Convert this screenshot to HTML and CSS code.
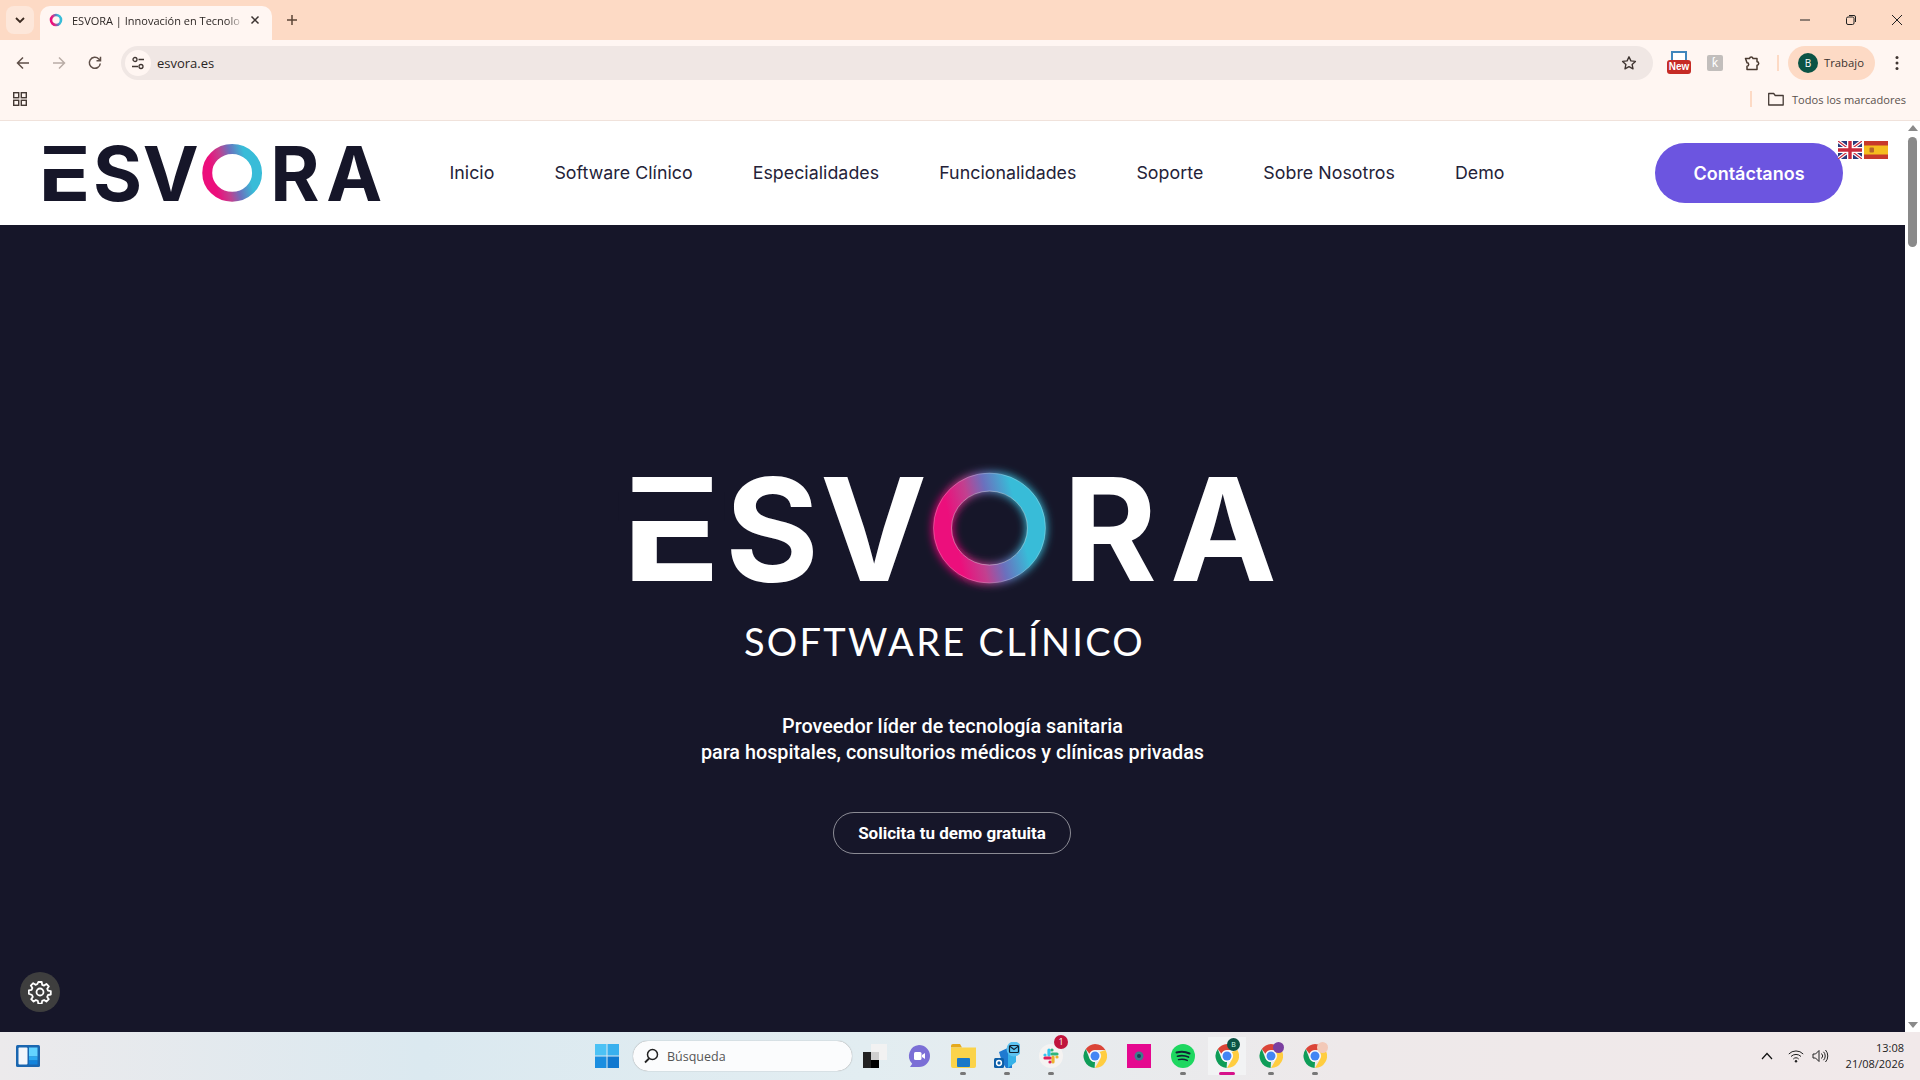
FILE: index.html
```html
<!DOCTYPE html>
<html lang="es">
  <head>
    <meta charset="utf-8" />
    <title>ESVORA | Innovación en Tecnología</title>
    <link rel="stylesheet" href="styles.css">
  </head>
  <body>
    <svg class="defs" width="0" height="0">
      <defs>
        <linearGradient id="ringGrad" x1="0" y1="0.62" x2="1" y2="0.38">
          <stop offset="0.12" stop-color="#ec0f7c" />
          <stop offset="0.35" stop-color="#c2408f" />
          <stop offset="0.55" stop-color="#6b70bd" />
          <stop offset="0.82" stop-color="#38bcd8" />
        </linearGradient>
        <symbol id="chromeIcon" viewBox="0 0 24 24">
          <path fill="#db4437" d="M12 0a12 12 0 0 1 10.400 6H12a6 6 0 0 0-5.600 3.800L2.800 5A12 12 0 0 1 12 0z" />
          <path fill="#ffcd40" d="M22.400 6A12 12 0 0 1 12 24l5.200-9a6 6 0 0 0-.6-6.900z" />
          <path fill="#0f9d58" d="M2.800 5l3.900 9.900A6 6 0 0 0 12 18l-.4 6A12 12 0 0 1 2.800 5z" />
          <circle cx="12" cy="12" r="5.600" fill="#fff" />
          <circle cx="12" cy="12" r="4.500" fill="#4285f4" />
        </symbol>
      </defs>
    </svg>

    <header class="browser">
      <div class="tabstrip">
        <button class="tab-search">
          <svg width="12" height="12" viewBox="0 0 12 12"><path d="M2 4l4 4 4-4" fill="none" stroke="#3b2a20" stroke-width="1.800" /></svg>
        </button>
        <div class="tab">
          <svg class="favicon" viewBox="0 0 14 14"><circle cx="7" cy="7" r="5" fill="none" stroke="url(#ringGrad)" stroke-width="2.600" /></svg>
          <span class="tab-title">ESVORA | Innovación en Tecnolo</span>
          <svg class="tab-close" width="10" height="10" viewBox="0 0 10 10"><path d="M1.500 1.500l7 7m0-7l-7 7" stroke="#3b3331" stroke-width="1.500" /></svg>
        </div>
        <svg class="new-tab" width="12" height="12" viewBox="0 0 12 12"><path d="M6 1v10M1 6h10" stroke="#5b4436" stroke-width="1.500" /></svg>
        <div class="win-controls">
          <svg width="12" height="12" viewBox="0 0 12 12"><path d="M1 6h10" stroke="#222" /></svg>
          <svg width="12" height="12" viewBox="0 0 12 12"><rect x="1.500" y="3" width="7.500" height="7.500" rx="1.500" fill="none" stroke="#222" /><path d="M4 1.500h5a1.500 1.500 0 0 1 1.500 1.500v5" fill="none" stroke="#222" /></svg>
          <svg width="12" height="12" viewBox="0 0 12 12"><path d="M1 1l10 10m0-10L1 11" stroke="#222" /></svg>
        </div>
      </div>

      <div class="toolbar">
        <svg class="tool-btn" width="16" height="16" viewBox="0 0 16 16"><path d="M14 8H3m5-5.500L2.500 8 8 13.500" fill="none" stroke="#5f4f48" stroke-width="1.500" /></svg>
        <svg class="tool-btn" width="16" height="16" viewBox="0 0 16 16"><path d="M2 8h11M8 2.500L13.500 8 8 13.500" fill="none" stroke="#b9aca6" stroke-width="1.500" /></svg>
        <svg class="tool-btn" width="16" height="16" viewBox="0 0 16 16"><path d="M13.300 8.500A5.500 5.500 0 1 1 11.800 4L13.500 5.700M13.500 1.800v4h-4" fill="none" stroke="#5f4f48" stroke-width="1.500" /></svg>
        <div class="omnibox">
          <span class="tune-chip">
            <svg width="14" height="14" viewBox="0 0 14 14"><circle cx="4" cy="3.500" r="2" fill="none" stroke="#3f3531" stroke-width="1.300" /><path d="M7.500 3.500H13M1 10.500h6" stroke="#3f3531" stroke-width="1.300" /><circle cx="10" cy="10.500" r="2" fill="none" stroke="#3f3531" stroke-width="1.300" /></svg>
          </span>
          <span class="url">esvora.es</span>
          <svg class="star" width="16" height="16" viewBox="0 0 16 16"><path d="M8 1.800l1.900 4.100 4.500.5-3.300 3 .9 4.400L8 11.600l-4 2.200.9-4.400-3.300-3 4.500-.5z" fill="none" stroke="#3f3531" stroke-width="1.400" stroke-linejoin="round" /></svg>
        </div>
        <div class="ext ext-new">
          <span class="ext-new-top"></span>
          <span class="ext-new-label">New</span>
        </div>
        <span class="ext ext-k">ƙ</span>
        <svg class="ext" width="16" height="16" viewBox="0 0 16 16"><path d="M1.500 3.500h4a1.800 1.800 0 0 1 3.500 0H13v3.300a1.700 1.700 0 0 1 0 3.400V14.500H3v-3.300a1.700 1.700 0 0 0 0-3.400z" fill="none" stroke="#4a3a30" stroke-width="1.500" stroke-linejoin="round" /></svg>
        <span class="tool-sep"></span>
        <div class="profile">
          <span class="avatar">B</span>
          <span>Trabajo</span>
        </div>
        <svg class="kebab" width="4" height="16" viewBox="0 0 4 16"><circle cx="2" cy="2.500" r="1.500" fill="#3f3531" /><circle cx="2" cy="8" r="1.500" fill="#3f3531" /><circle cx="2" cy="13.500" r="1.500" fill="#3f3531" /></svg>
      </div>

      <div class="bookmarks">
        <svg width="14" height="14" viewBox="0 0 14 14"><g fill="none" stroke="#453a35" stroke-width="1.400"><rect x="0.700" y="0.700" width="5" height="5" /><rect x="8.300" y="0.700" width="5" height="5" /><rect x="0.700" y="8.300" width="5" height="5" /><rect x="8.300" y="8.300" width="5" height="5" /></g></svg>
        <span class="book-sep"></span>
        <svg width="16" height="14" viewBox="0 0 16 14"><path d="M.7 1.500h5l1.500 2h8v9.500H.7z" fill="none" stroke="#453a35" stroke-width="1.300" stroke-linejoin="round" /></svg>
        <span class="book-label">Todos los marcadores</span>
      </div>
    </header>

    <div class="viewport">
      <div class="page">
        <nav class="site-nav">
          <div class="logo logo-small">
            <span class="l-e">E</span><span class="l-s">S</span><span class="l-v">V</span>
            <svg class="l-o" viewBox="0 0 115 110"><ellipse cx="57.500" cy="55" rx="47.500" ry="45.500" fill="none" stroke="url(#ringGrad)" stroke-width="19" filter="blur(.8px)" /></svg>
            <span class="l-r">R</span><span class="l-a">A</span>
          </div>
          <ul class="menu">
            <li>Inicio</li>
            <li>Software Clínico</li>
            <li>Especialidades</li>
            <li>Funcionalidades</li>
            <li>Soporte</li>
            <li>Sobre Nosotros</li>
            <li>Demo</li>
          </ul>
          <button class="contact">Contáctanos</button>
          <div class="flags">
            <svg width="24" height="18" viewBox="0 0 24 18">
              <rect width="24" height="18" fill="#2a3a7c" />
              <path d="M0 0l24 18M24 0L0 18" stroke="#fff" stroke-width="3.500" />
              <path d="M0 0l24 18M24 0L0 18" stroke="#c8283c" stroke-width="1.200" />
              <path d="M12 0v18M0 9h24" stroke="#fff" stroke-width="6" />
              <path d="M12 0v18M0 9h24" stroke="#c8283c" stroke-width="3.400" />
            </svg>
            <svg width="24" height="18" viewBox="0 0 24 18">
              <rect width="24" height="18" fill="#c8392b" />
              <rect y="4.500" width="24" height="9" fill="#f5bd1f" />
              <rect x="5.500" y="6.500" width="4.500" height="5" rx="1" fill="#b5652c" />
            </svg>
          </div>
        </nav>

        <main class="hero">
          <div class="logo logo-big">
            <span class="l-e">E</span><span class="l-s">S</span><span class="l-v">V</span>
            <svg class="l-o" viewBox="0 0 115 110">
              <defs>
                <filter id="glow" x="-20%" y="-20%" width="140%" height="140%"><feGaussianBlur stdDeviation="4" /></filter>
              </defs>
              <ellipse cx="57.500" cy="55" rx="47" ry="46" fill="none" stroke="url(#ringGrad)" stroke-width="20" filter="url(#glow)" />
              <ellipse cx="57.500" cy="55" rx="47" ry="46" fill="none" stroke="url(#ringGrad)" stroke-width="18" />
              <ellipse cx="57.500" cy="55" rx="38" ry="37" fill="none" stroke="#ffffff" stroke-opacity=".45" stroke-width=".8" />
              <ellipse cx="57.500" cy="55" rx="56" ry="55" fill="none" stroke="#ffffff" stroke-opacity=".3" stroke-width=".8" />
            </svg>
            <span class="l-r">R</span><span class="l-a">A</span>
          </div>
          <h2 class="tagline">SOFTWARE CLÍNICO</h2>
          <p class="lead">Proveedor líder de tecnología sanitaria<br />para hospitales, consultorios médicos y clínicas privadas</p>
          <button class="demo">Solicita tu demo gratuita</button>
          <button class="cookie-gear">
            <svg width="24" height="24" viewBox="0 0 24 24"><g fill="none" stroke="#fff" stroke-width="1.800" stroke-linejoin="round"><circle cx="12" cy="12" r="3.500" /><path d="M10.300 2h3.400l.5 2.800 1.900.8 2.300-1.600 2.400 2.400-1.600 2.300.8 1.900 2.800.5v3.400l-2.800.5-.8 1.900 1.600 2.300-2.400 2.400-2.300-1.600-1.900.8-.5 2.800h-3.400l-.5-2.800-1.900-.8-2.300 1.600-2.400-2.400 1.600-2.300-.8-1.900L.8 13.700v-3.400l2.800-.5.8-1.900L2.800 5.600l2.400-2.400 2.300 1.600 1.900-.8z" /></g></svg>
          </button>
        </main>
      </div>
      <div class="scrollbar">
        <span class="arrow-up"></span>
        <span class="thumb"></span>
        <span class="arrow-down"></span>
      </div>
    </div>

    <footer class="taskbar">
      <svg class="widgets" width="24" height="22" viewBox="0 0 24 22"><rect width="24" height="22" rx="1.500" fill="#1a66b0" /><rect x="2.500" y="2.500" width="9" height="17" rx="1" fill="#f3f6fb" /><rect x="13" y="2.500" width="8.500" height="9" fill="#63d3ff" /><rect x="13" y="11.500" width="8.500" height="4" fill="#2aa8f0" /><rect x="13" y="15.500" width="8.500" height="4" fill="#1283dc" /></svg>
      <div class="task-center">
        <svg class="win-logo" width="24" height="24" viewBox="0 0 24 24"><rect width="11.500" height="11.500" fill="#4cc2f5" /><rect x="12.500" width="11.500" height="11.500" fill="#39b0ee" /><rect y="12.500" width="11.500" height="11.500" fill="#1a8ee0" /><rect x="12.500" y="12.500" width="11.500" height="11.500" fill="#1078cf" /></svg>
        <div class="search-box">
          <svg width="16" height="16" viewBox="0 0 16 16"><circle cx="9.500" cy="6.500" r="5" fill="none" stroke="#222" stroke-width="1.500" /><path d="M6 10.500L2 14.500" stroke="#222" stroke-width="1.800" /></svg>
          <span>Búsqueda</span>
        </div>
        <ul class="apps">
          <li>
            <svg width="24" height="24" viewBox="0 0 24 24"><rect x="8" y="0" width="16" height="16" fill="#f2f2f2" /><rect x="0" y="8" width="16" height="16" fill="#222" /><path d="M8 16h8v8H8z" fill="#000" /><path d="M8 8h8v8H8z" fill="#cfcfcf" /></svg>
          </li>
          <li>
            <svg width="24" height="24" viewBox="0 0 24 24"><path d="M12 1a11 11 0 0 1 11 11 11 11 0 0 1-11 11H3l2.200-3.200A11 11 0 0 1 12 1z" fill="#7b6fd6" /><rect x="7" y="8" width="7.500" height="8" rx="1.500" fill="#fff" /><path d="M15 11l3-2v6l-3-2z" fill="#fff" /></svg>
          </li>
          <li class="has-dot">
            <svg width="25" height="24" viewBox="0 0 25 24"><path d="M0 2a2 2 0 0 1 2-2h7l2 3.500H0z" fill="#e5a91c" /><path d="M0 3.500h25V22a2 2 0 0 1-2 2H2a2 2 0 0 1-2-2z" fill="#fbd34a" /><rect x="6" y="14" width="13" height="9" rx="1" fill="#1a78c8" /></svg>
          </li>
          <li class="has-dot">
            <svg width="26" height="28" viewBox="0 0 26 28"><path d="M5 10L18 4v22H12L8 20z" fill="#1f7ad0" /><path d="M14 4h8v16l-8 6z" fill="#36b2e8" /><rect x="0" y="16" width="10" height="10" rx="1.500" fill="#0d5fa8" /><circle cx="5" cy="21" r="2.400" fill="none" stroke="#fff" stroke-width="1.500" /><circle cx="20" cy="7" r="7.500" fill="#5cc2f0" /><rect x="15.500" y="3.500" width="9" height="7" rx="1" fill="none" stroke="#123" stroke-width="1.200" /><path d="M15.500 4l4.500 3.500L24.500 4" fill="none" stroke="#123" stroke-width="1.100" /></svg>
          </li>
          <li class="has-dot slack">
            <svg width="24" height="24" viewBox="0 0 24 24"><circle cx="12" cy="12" r="12" fill="#f5f3f2" /><g stroke-width="3.200" stroke-linecap="round"><path d="M10 6v5M6 11h0" stroke="#36c5f0" /><path d="M18 10h-5M13 6h0" stroke="#2eb67d" /><path d="M14 18v-5M18 13h0" stroke="#ecb22e" /><path d="M6 14h5M11 18h0" stroke="#e01e5a" /></g></svg>
            <span class="badge">1</span>
          </li>
          <li><svg width="24" height="24"><use href="#chromeIcon" /></svg></li>
          <li>
            <svg width="24" height="24" viewBox="0 0 24 24"><rect width="24" height="24" fill="#e5088f" /><circle cx="12" cy="12" r="4.500" fill="#3c7d8c" /><circle cx="12" cy="12" r="2" fill="#1a3f55" /></svg>
          </li>
          <li class="has-dot">
            <svg width="24" height="24" viewBox="0 0 24 24"><circle cx="12" cy="12" r="12" fill="#1ed760" /><g fill="none" stroke="#123" stroke-linecap="round"><path d="M5.500 8.500c4.500-1.300 9-1 13 1" stroke-width="2" /><path d="M6.500 12.200c3.800-1 7.500-.8 11 .9" stroke-width="1.700" /><path d="M7.500 15.600c3-.7 6-.6 8.800.8" stroke-width="1.400" /></g></svg>
          </li>
          <li class="active">
            <svg width="24" height="24"><use href="#chromeIcon" /></svg>
            <span class="avatar-mini">B</span>
          </li>
          <li class="has-dot chrome-tag purple">
            <svg width="24" height="24"><use href="#chromeIcon" /></svg>
          </li>
          <li class="has-dot chrome-tag peach">
            <svg width="24" height="24"><use href="#chromeIcon" /></svg>
          </li>
        </ul>
      </div>
      <div class="tray">
        <svg width="12" height="8" viewBox="0 0 12 8"><path d="M1 7l5-5.500L11 7" fill="none" stroke="#111" stroke-width="1.200" /></svg>
        <svg width="16" height="14" viewBox="0 0 16 14"><g fill="none" stroke="#222" stroke-width="1"><path d="M.8 5a10 10 0 0 1 14.400 0" /><path d="M3 7.500a7 7 0 0 1 10 0" /><path d="M5.300 10a3.600 3.600 0 0 1 5.400 0" /></g><circle cx="8" cy="12.300" r="1.200" fill="#222" /></svg>
        <svg width="17" height="14" viewBox="0 0 17 14"><g fill="none" stroke="#222" stroke-width="1"><path d="M1 5h2.500L7 1.500v11L3.500 9H1z" stroke-linejoin="round" /><path d="M9.500 4.500a3.500 3.500 0 0 1 0 5" /><path d="M11.500 2.800a6 6 0 0 1 0 8.400" /><path d="M13.500 1a9 9 0 0 1 0 12" /></g></svg>
        <div class="clock">
          <span>13:08</span>
          <span>21/08/2026</span>
        </div>
      </div>
    </footer>
  </body>
</html>
```

FILE: styles.css
```css
* {
  box-sizing: border-box;
}
html,
body {
  margin: 0;
  height: 100%;
  overflow: hidden;
}
body {
  display: flex;
  flex-direction: column;
  font-family: "Open Sans", "Noto Sans", sans-serif;
  background-color: #161629;
}
button {
  font: inherit;
  cursor: pointer;
}
ul {
  list-style: none;
  margin: 0;
  padding: 0;
}
.defs {
  position: absolute;
}

/* browser chrome */
.browser {
  height: 121px;
  flex: none;
  background-color: #fff6f2;
  border-bottom: 1px solid #f0e2db;
}
.tabstrip {
  height: 40px;
  display: flex;
  align-items: flex-end;
  background-color: #fddac5;
  padding-left: 6px;
}
.tab-search {
  width: 28px;
  height: 28px;
  margin-bottom: 6px;
  border: none;
  border-radius: 8px;
  background-color: #fde7da;
  display: flex;
  align-items: center;
  justify-content: center;
  padding: 0;
}
.tab {
  width: 232px;
  height: 34px;
  margin-left: 6px;
  padding: 0 0 6px 9px;
  display: flex;
  align-items: center;
  background-color: #fff6f2;
  border-radius: 10px 10px 0 0;
}
.favicon {
  width: 14px;
  height: 14px;
  flex: none;
}
.tab-title {
  width: 172px;
  margin-left: 9px;
  font-size: 11px;
  color: #2d2725;
  white-space: nowrap;
  -webkit-mask-image: linear-gradient(to right, #000 90%, transparent);
  mask-image: linear-gradient(to right, #000 90%, transparent);
}
.tab-close {
  margin-left: 6px;
}
.new-tab {
  margin: 0 0 14px 14px;
}
.win-controls {
  margin: 0 0 14px auto;
  display: flex;
  gap: 34px;
  padding-right: 17px;
}
.toolbar {
  height: 45px;
  display: flex;
  align-items: center;
  padding: 0 0 0 15px;
}
.tool-btn {
  margin-right: 20px;
  flex: none;
}
.tool-btn:nth-child(3) {
  margin-right: 18px;
}
.omnibox {
  width: 1532px;
  height: 34px;
  border-radius: 17px;
  background-color: #f0e7e4;
  display: flex;
  align-items: center;
  padding: 0 16px 0 4px;
  flex: none;
}
.tune-chip {
  width: 26px;
  height: 26px;
  border-radius: 50%;
  background-color: #fff6f2;
  display: flex;
  align-items: center;
  justify-content: center;
}
.url {
  margin-left: 6px;
  font-size: 13px;
  color: #2a2523;
}
.star {
  margin-left: auto;
}
.ext {
  flex: none;
}
.ext-new {
  width: 24px;
  height: 23px;
  margin-left: 14px;
  position: relative;
}
.ext-new-top {
  display: block;
  width: 16px;
  height: 12px;
  margin: 0 auto;
  background-color: #fff;
  border: 2px solid #3f86bd;
  border-bottom: none;
}
.ext-new-label {
  position: absolute;
  left: 0;
  bottom: 0;
  width: 24px;
  height: 14px;
  border-radius: 3px;
  background-color: #c62b25;
  color: #fff;
  font: bold 10px/14px "Liberation Sans", sans-serif;
  text-align: center;
}
.ext-k {
  width: 16px;
  height: 16px;
  margin-left: 16px;
  border-radius: 2px;
  background-color: #c2bebc;
  color: #fff;
  font-size: 12px;
  line-height: 16px;
  text-align: center;
}
.toolbar svg.ext {
  margin-left: 21px;
}
.tool-sep {
  width: 2px;
  height: 16px;
  margin-left: 17px;
  background-color: #fddac5;
  flex: none;
}
.profile {
  width: 87px;
  height: 34px;
  margin-left: 9px;
  padding-left: 10px;
  border-radius: 17px;
  background-color: #fddac5;
  display: flex;
  align-items: center;
  gap: 6px;
  font-size: 11.300px;
  color: #3a322e;
  flex: none;
}
.avatar {
  width: 20px;
  height: 20px;
  border-radius: 50%;
  background-color: #0b5345;
  color: #fff;
  font-size: 10px;
  line-height: 20px;
  text-align: center;
}
.kebab {
  margin-left: 20px;
  flex: none;
}
.bookmarks {
  height: 35px;
  display: flex;
  align-items: center;
  padding: 0 14px 7px 13px;
}
.book-sep {
  width: 2px;
  height: 16px;
  margin-left: auto;
  background-color: #fddac5;
}
.bookmarks > svg:nth-of-type(2) {
  margin-left: 16px;
}
.book-label {
  margin-left: 8px;
  font-size: 11.100px;
  color: #5a514d;
}

/* page area */
.viewport {
  flex: 1;
  display: flex;
  min-height: 0;
}
.page {
  flex: 1;
  display: flex;
  flex-direction: column;
  min-width: 0;
}
.scrollbar {
  width: 15px;
  flex: none;
  background-color: #fff;
  display: flex;
  flex-direction: column;
  align-items: center;
  padding: 4px 0 4px;
}
.arrow-up,
.arrow-down {
  width: 0;
  height: 0;
  border-left: 5px solid transparent;
  border-right: 5px solid transparent;
}
.arrow-up {
  border-bottom: 6px solid #8a8a8a;
}
.arrow-down {
  margin-top: auto;
  border-top: 6px solid #8a8a8a;
}
.thumb {
  width: 9px;
  height: 110px;
  margin-top: 6px;
  border-radius: 5px;
  background-color: #8a8a8a;
}
.site-nav {
  height: 104px;
  flex: none;
  position: relative;
  display: flex;
  align-items: center;
  padding: 0 62px 0 45px;
  background-color: #fff;
  color: #161629;
}
.logo {
  display: flex;
  align-items: center;
  font-family: Inter, sans-serif;
  font-weight: 700;
  line-height: 1;
}
.logo-small {
  font-size: 75px;
}
.logo-big {
  font-size: 143px;
  color: #fff;
}
.logo span {
  display: flex;
  justify-content: center;
  flex: none;
}
.l-e {
  position: relative;
  width: 0.552em;
}
.logo .l-e {
  transform: translateX(-0.015em) scaleX(1.14);
}
/* splits the top bar of the E off from the rest */
.l-e::after {
  content: "";
  position: absolute;
  left: -0.05em;
  width: 0.65em;
  top: 0.246em;
  height: 0.2em;
  background-color: #fff;
}
.logo-big .l-e::after {
  background-color: #161629;
}
.l-s {
  width: 0.58em;
  margin-left: 0.126em;
}
.l-v {
  width: 0.671em;
  margin-left: 0.084em;
}
.l-o {
  width: 0.804em;
  height: 0.77em;
  margin-left: 0.077em;
  flex: none;
  overflow: visible;
}
.l-r {
  width: 0.608em;
  margin-left: 0.133em;
}
.l-a {
  width: 0.671em;
  margin-left: 0.154em;
}
.menu {
  margin-left: 70px;
  padding-bottom: 2px;
  display: flex;
  gap: 60px;
  font-family: Inter, sans-serif;
  font-size: 17.800px;
  letter-spacing: 0.040px;
  color: #242238;
}
.contact {
  width: 188px;
  height: 60px;
  margin-left: auto;
  border: none;
  border-radius: 30px;
  background-color: #6c55e0;
  color: #fff;
  font-family: Inter, sans-serif;
  font-size: 18px;
  font-weight: 600;
}
.flags {
  position: absolute;
  top: 20px;
  right: 17px;
  display: flex;
  gap: 2px;
}
.hero {
  flex: 1;
  position: relative;
  display: flex;
  flex-direction: column;
  align-items: center;
  padding-top: 232px;
  background-color: #161629;
  color: #fff;
}
.tagline {
  margin: 18px 16px 0 0;
  font-family: Lato, sans-serif;
  font-size: 38px;
  font-weight: 400;
  line-height: 46px;
  letter-spacing: 2.300px;
}
.lead {
  margin: 50px 0 0;
  font-family: Roboto, sans-serif;
  font-size: 19.800px;
  font-weight: 500;
  line-height: 26px;
  text-align: center;
}
.demo {
  width: 238px;
  height: 42px;
  margin: 46px 1px 0 0;
  border: 1px solid #ffffff80;
  border-radius: 21px;
  background: none;
  color: #fff;
  font-family: Roboto, sans-serif;
  font-size: 17px;
  font-weight: 700;
}
.cookie-gear {
  position: absolute;
  left: 20px;
  bottom: 20px;
  width: 40px;
  height: 40px;
  padding: 0;
  border: none;
  border-radius: 50%;
  background-color: #3e3e3e;
  display: flex;
  align-items: center;
  justify-content: center;
}

/* windows taskbar */
.taskbar {
  height: 48px;
  flex: none;
  display: flex;
  align-items: center;
  padding: 0 16px;
  background: linear-gradient(to right, #eceaec 0, #dbe9f0 22%, #e2edf1 45%, #eee9ea 70%, #f1e9ea 100%);
}
.task-center {
  display: flex;
  align-items: center;
  margin-left: 555px;
}
.search-box {
  width: 219px;
  height: 30px;
  margin-left: 14px;
  padding-left: 10px;
  border-radius: 15px;
  background-color: #fbfcfd;
  box-shadow: 0 0 1px #777;
  display: flex;
  align-items: center;
  gap: 8px;
  font-size: 12.500px;
  color: #555;
}
.apps {
  display: flex;
  align-items: center;
  margin-left: 1px;
}
.apps li {
  width: 44px;
  height: 48px;
  position: relative;
  display: flex;
  align-items: center;
  justify-content: center;
  padding-bottom: 1px;
}
.apps li.has-dot::after {
  content: "";
  position: absolute;
  left: 19px;
  bottom: 5px;
  width: 6px;
  height: 3px;
  border-radius: 2px;
  background-color: #777;
}
.apps li.active {
  background: linear-gradient(#f2f3f4, #f2f3f4) center 5px / 38px 38px no-repeat;
}
.apps li.active::after {
  content: "";
  position: absolute;
  left: 14px;
  bottom: 5px;
  width: 16px;
  height: 3px;
  border-radius: 2px;
  background-color: #d6118a;
}
.badge {
  position: absolute;
  top: 3px;
  right: 5px;
  width: 14px;
  height: 14px;
  border-radius: 50%;
  background-color: #c0143c;
  color: #fff;
  font-size: 9px;
  line-height: 14px;
  text-align: center;
}
.avatar-mini {
  position: absolute;
  top: 6px;
  right: 9px;
  width: 13px;
  height: 13px;
  border-radius: 50%;
  background-color: #0b5345;
  color: #cfe;
  font-size: 7px;
  line-height: 13px;
  text-align: center;
}
.chrome-tag::before {
  content: "";
  position: absolute;
  top: 10px;
  right: 9px;
  width: 11px;
  height: 11px;
  border-radius: 50%;
}
.purple::before {
  background-color: #7b3fa0;
}
.peach::before {
  background-color: #f3c9b8;
}
.tray {
  margin-left: auto;
  display: flex;
  align-items: center;
}
.tray svg:nth-child(2) {
  margin-left: 15px;
}
.tray svg:nth-child(3) {
  margin-left: 8px;
}
.clock {
  width: 62px;
  margin-left: 13px;
  display: flex;
  flex-direction: column;
  align-items: flex-end;
  font-size: 11px;
  line-height: 16px;
  color: #222;
}
```
